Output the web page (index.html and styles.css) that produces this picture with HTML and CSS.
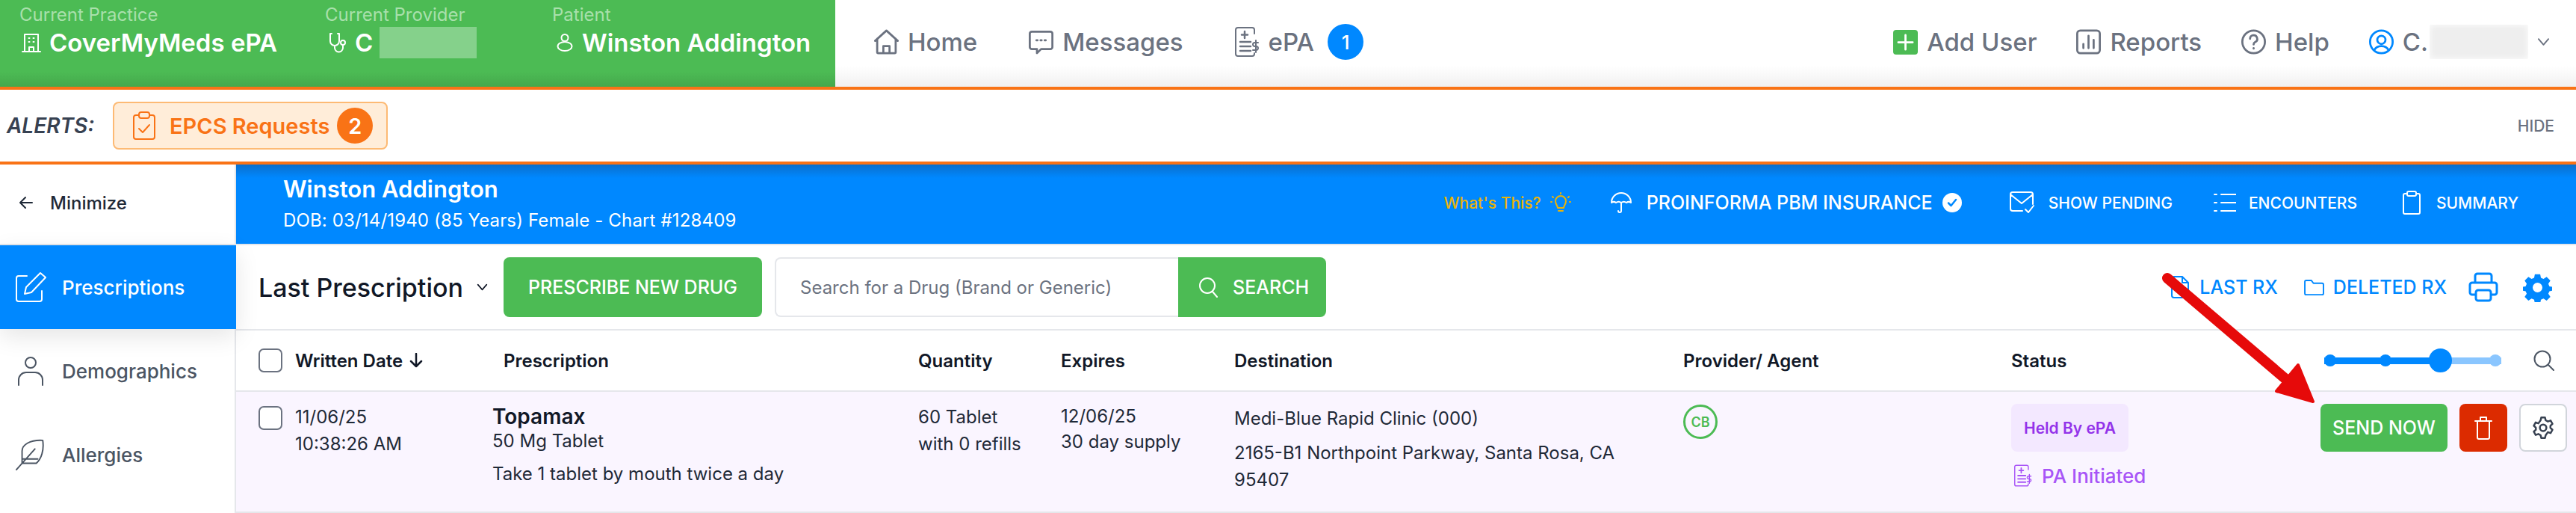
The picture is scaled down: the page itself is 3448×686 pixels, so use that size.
FILE: index.html
```html
<!DOCTYPE html>
<html lang="en">
<head>
    <meta charset="UTF-8">
    <title>Prescriptions - Winston Addington</title>
    <link rel="stylesheet" href="styles.css">
</head>
<body>
    <header class="top-bar">
        <div class="context">
            <div class="context-item practice">
                <span class="context-label">Current Practice</span>
                <span class="context-value">
                    <svg class="icon-building" viewBox="0 0 26 26"><path d="M4 25V2h18v23M1 25h24M10 25v-6h6v6M9.500 7h1M15.500 7h1M9.500 12h1M15.500 12h1"/></svg>
                    CoverMyMeds ePA
                </span>
            </div>
            <div class="context-item provider">
                <span class="context-label">Current Provider</span>
                <span class="context-value">
                    <svg class="icon-scope" viewBox="0 0 27 28"><path d="M5 2H3v10a6 6 0 0 0 12 0V2h-2M9 18v3a5.500 5.500 0 0 0 11 0v-4"/><circle cx="20" cy="14" r="3"/></svg>
                    C<span class="blur-green"></span>
                </span>
            </div>
            <div class="context-item patient">
                <span class="context-label">Patient</span>
                <span class="context-value">
                    <svg class="icon-patient" viewBox="0 0 22 24"><circle cx="11" cy="5.500" r="4.500"/><ellipse cx="11" cy="17" rx="9.500" ry="6"/></svg>
                    Winston Addington
                </span>
            </div>
        </div>
        <nav class="nav-main">
            <a class="nav-link">
                <svg class="icon-nav" viewBox="0 0 24 24"><path d="M1 11 12 1l11 10M3 9v13a1 1 0 0 0 1 1h16a1 1 0 0 0 1-1V9M9 23v-7h6v7"/></svg>
                Home
            </a>
            <a class="nav-link">
                <svg class="icon-nav" viewBox="0 0 24 24"><path d="M3 2h18a2 2 0 0 1 2 2v13a2 2 0 0 1-2 2h-9l-4 4v-4H3a2 2 0 0 1-2-2V4a2 2 0 0 1 2-2z"/><path d="M7.500 10.500h1M11.500 10.500h1M15.500 10.500h1"/></svg>
                Messages
            </a>
            <a class="nav-link">
                <svg class="icon-epa" viewBox="0 0 33 40"><path d="M26 9V4a3 3 0 0 0-3-3H4a3 3 0 0 0-3 3v32a3 3 0 0 0 3 3h19a3 3 0 0 0 3-3v-1"/><path d="M13 6v9M9 10.500h8M7 20h14M7 26h14M7 32h14" stroke-width="2.500"/><path d="M31 21h-4.500a2 2 0 0 0 0 5h2a2 2 0 0 1 0 5H24M28 18v16" stroke-width="2"/></svg>
                ePA
                <span class="count-badge">1</span>
            </a>
        </nav>
        <nav class="nav-side">
            <a class="nav-link">
                <span class="add-box">
                    <svg viewBox="0 0 24 24"><path d="M12 5v14M5 12h14"/></svg>
                </span>
                Add User
            </a>
            <a class="nav-link">
                <svg class="icon-nav" viewBox="0 0 24 24"><rect x="1" y="1" width="22" height="22" rx="3"/><path d="M7 18v-4M12 18V6M17 18V10"/></svg>
                Reports
            </a>
            <a class="nav-link">
                <svg class="icon-nav" viewBox="0 0 24 24"><circle cx="12" cy="12" r="11"/><path d="M8.500 9a3.500 3.500 0 1 1 5 3.200c-1 .5-1.500 1.300-1.500 2.300M12 18v.5"/></svg>
                Help
            </a>
            <a class="nav-link user-link">
                <svg class="icon-nav" viewBox="0 0 24 24"><circle cx="12" cy="12" r="11"/><circle cx="12" cy="10" r="4"/><path d="M5 20c1.500-3 4-4 7-4s5.500 1 7 4"/></svg>
                C.<span class="blur-grey"></span>
                <svg class="chevron" viewBox="0 0 18 12"><path d="m2 2 7 8 7-8"/></svg>
            </a>
        </nav>
    </header>

    <section class="alerts">
        <span class="alerts-label">ALERTS:</span>
        <div class="alert-chip">
            <svg class="icon-clip" viewBox="0 0 32 40"><path d="M9 6H5a3 3 0 0 0-3 3v26a3 3 0 0 0 3 3h22a3 3 0 0 0 3-3V9a3 3 0 0 0-3-3h-4"/><rect x="9" y="2" width="14" height="8" rx="3"/><path d="m9 24 5 5 9-10"/></svg>
            EPCS Requests
            <span class="alert-count">2</span>
        </div>
        <a class="hide-link">HIDE</a>
    </section>

    <div class="workspace">
        <aside class="sidebar">
            <div class="minimize">
                <svg viewBox="0 0 20 20"><path d="M18 10H2M9 3l-7 7 7 7"/></svg>
                Minimize
            </div>
            <div class="side-item active">
                <svg class="icon-side" viewBox="0 0 42 42"><path d="M16 6H5a3 3 0 0 0-3 3v28a3 3 0 0 0 3 3h28a3 3 0 0 0 3-3V26"/><path d="M34 2l7 6-19 20-9 2 2-9z"/></svg>
                Prescriptions
            </div>
            <div class="side-item">
                <svg class="icon-side" viewBox="0 0 42 40"><circle cx="21" cy="9" r="7"/><path d="M5 39v-7a10 10 0 0 1 10-10h12a10 10 0 0 1 10 10v7"/></svg>
                Demographics
            </div>
            <div class="side-item">
                <svg class="icon-side" viewBox="0 0 42 44"><path d="M9 34V17C9 8 20 1 38 2c2 14-2 26-9 32zM1 43 27 14M9 28h22"/></svg>
                Allergies
            </div>
        </aside>

        <main class="content">
            <div class="patient-banner">
                <div class="patient-info">
                    <div class="patient-name">Winston Addington</div>
                    <div class="patient-meta">DOB: 03/14/1940 (85 Years) Female - Chart #128409</div>
                </div>
                <div class="banner-actions">
                    <span class="whats-this">What's This?
                        <svg viewBox="0 0 28 28"><path d="M10 21c0-3-3-5-3-9a7 7 0 0 1 14 0c0 4-3 6-3 9zM11 25h6M14 1v1M3 6l1 1M25 6l-1 1M1 13h1M27 13h-1"/></svg>
                    </span>
                    <span class="insurance">
                        <svg viewBox="0 0 30 30"><path d="M2 15a13 13 0 0 1 26 0c-2-1.500-4-1.500-6 0-2-1.500-5-1.500-7 0-2-1.500-5-1.500-7 0-2-1.500-4-1.500-6 0zM15 15v11a2 2 0 0 1-4 0"/></svg>
                        PROINFORMA PBM INSURANCE
                        <svg class="check-circle" viewBox="0 0 26 26"><circle cx="13" cy="13" r="13"/><path d="m8 13.500 3.500 3.500L18 9"/></svg>
                    </span>
                    <a class="banner-link pending">
                        <svg viewBox="0 0 34 30"><path d="M18 26H5a3 3 0 0 1-3-3V4a3 3 0 0 1 3-3h24a3 3 0 0 1 3 3v13M2 4l15 12L32 4M22 24l4 4 7-9"/></svg>
                        SHOW PENDING
                    </a>
                    <a class="banner-link encounters">
                        <svg viewBox="0 0 30 28"><path d="M10 3h20M10 14h20M10 25h20M1 3h3M1 14h3M1 25h3"/></svg>
                        ENCOUNTERS
                    </a>
                    <a class="banner-link summary">
                        <svg viewBox="0 0 26 32"><path d="M7 4H4a2 2 0 0 0-2 2v23a2 2 0 0 0 2 2h18a2 2 0 0 0 2-2V6a2 2 0 0 0-2-2h-3"/><rect x="7" y="1" width="12" height="6" rx="2"/></svg>
                        SUMMARY
                    </a>
                </div>
            </div>

            <div class="toolbar">
                <div class="rx-select">
                    Last Prescription
                    <svg class="chevron" viewBox="0 0 18 12"><path d="m2 2 7 8 7-8"/></svg>
                </div>
                <button class="btn-green btn-prescribe">PRESCRIBE NEW DRUG</button>
                <div class="drug-search">
                    <input type="text" placeholder="Search for a Drug (Brand or Generic)">
                    <button class="btn-green btn-search">
                        <svg viewBox="0 0 26 28"><circle cx="12" cy="12" r="10"/><path d="m19 20 6 7"/></svg>
                        SEARCH
                    </button>
                </div>
                <div class="toolbar-links">
                    <a class="rx-link last-rx">
                        <svg viewBox="0 0 24 30"><path d="M15 1H4a3 3 0 0 0-3 3v22a3 3 0 0 0 3 3h16a3 3 0 0 0 3-3V9zM15 1v8h8"/></svg>
                        LAST RX
                    </a>
                    <a class="rx-link deleted-rx">
                        <svg viewBox="0 0 28 24"><path d="M1 4a2 2 0 0 1 2-2h7l3 4h12a2 2 0 0 1 2 2v12a2 2 0 0 1-2 2H3a2 2 0 0 1-2-2z"/></svg>
                        DELETED RX
                    </a>
                    <svg class="icon-print" viewBox="0 0 40 40"><path d="M9 14V5a3 3 0 0 1 3-3h16a3 3 0 0 1 3 3v9M9 30H5a3 3 0 0 1-3-3V17a3 3 0 0 1 3-3h30a3 3 0 0 1 3 3v10a3 3 0 0 1-3 3h-4"/><rect x="10" y="24" width="20" height="14" rx="3"/></svg>
                    <svg class="icon-gear" viewBox="0 0 24 24"><path fill-rule="evenodd" d="M14.200 1l.6 3 2.100.9 2.600-1.700 3.100 3.100-1.700 2.600.9 2.100 3 .6v2.800l-3 .6-.9 2.100 1.700 2.600-3.100 3.100-2.600-1.700-2.100.9-.6 3h-4.400l-.6-3-2.100-.9-2.600 1.700-3.100-3.100 1.700-2.600-.9-2.100-3-.6v-2.800l3-.6.9-2.100-1.700-2.600 3.100-3.100 2.600 1.700 2.100-.9.6-3zM12 8a4 4 0 1 0 0 8 4 4 0 0 0 0-8z"/></svg>
                </div>
            </div>

            <div class="rx-table">
                <div class="rx-grid rx-head">
                    <div class="date-cell">
                        <span class="checkbox"></span>
                        Written Date
                        <svg class="sort-arrow" viewBox="0 0 18 20"><path d="M9 1v17M2 11l7 7 7-7"/></svg>
                    </div>
                    <div class="head-prescription">Prescription</div>
                    <div>Quantity</div>
                    <div>Expires</div>
                    <div>Destination</div>
                    <div>Provider/ Agent</div>
                    <div>Status</div>
                    <div class="head-tools">
                        <div class="density-slider">
                            <span class="dot"></span>
                            <span class="dot"></span>
                            <span class="dot dot-big"></span>
                            <span class="dot dot-light"></span>
                        </div>
                        <svg class="icon-find" viewBox="0 0 28 28"><circle cx="12" cy="12" r="10.500"/><path d="m20 20 7 7"/></svg>
                    </div>
                </div>
                <div class="rx-grid rx-row">
                    <div class="date-cell row-date">
                        <span class="checkbox"></span>
                        <div class="two-lines">
                            <div>11/06/25</div>
                            <div>10:38:26 AM</div>
                        </div>
                    </div>
                    <div class="drug">
                        <div class="drug-name">Topamax</div>
                        <div class="drug-strength">50 Mg Tablet</div>
                        <div class="drug-sig">Take 1 tablet by mouth twice a day</div>
                    </div>
                    <div class="two-lines">
                        <div>60 Tablet</div>
                        <div>with 0 refills</div>
                    </div>
                    <div class="expires">
                        <div>12/06/25</div>
                        <div>30 day supply</div>
                    </div>
                    <div class="destination">
                        <div class="dest-name">Medi-Blue Rapid Clinic (000)</div>
                        <div>2165-B1 Northpoint Parkway, Santa Rosa, CA 95407</div>
                    </div>
                    <div><span class="agent-badge">CB</span></div>
                    <div class="status">
                        <span class="held-badge">Held By ePA</span>
                        <span class="pa-status">
                            <svg viewBox="0 0 33 40"><path d="M26 9V4a3 3 0 0 0-3-3H4a3 3 0 0 0-3 3v32a3 3 0 0 0 3 3h19a3 3 0 0 0 3-3v-1"/><path d="M13 6v9M9 10.500h8M7 20h14M7 26h14M7 32h14" stroke-width="2.500"/><path d="M31 21h-4.500a2 2 0 0 0 0 5h2a2 2 0 0 1 0 5H24M28 18v16" stroke-width="2"/></svg>
                            PA Initiated
                        </span>
                    </div>
                    <div class="row-actions">
                        <button class="btn-green btn-send">SEND NOW</button>
                        <button class="btn-delete">
                            <svg viewBox="0 0 24 32"><path d="M1 7h22M8 7V2h8v5M4 7v22a2 2 0 0 0 2 2h12a2 2 0 0 0 2-2V7"/></svg>
                        </button>
                        <button class="btn-settings">
                            <svg viewBox="0 0 24 24"><path d="M10 1h4l.7 3 2.400 1.300 2.900-1 2 3.500-2.200 2.100v2.200l2.200 2.100-2 3.500-2.900-1L14.700 20l-.7 3h-4l-.7-3-2.400-1.300-2.900 1-2-3.500 2.200-2.100v-2.200L2 9.800l2-3.500 2.900 1L9.300 4z"/><circle cx="12" cy="12" r="3.500"/></svg>
                        </button>
                    </div>
                </div>
            </div>
        </main>
    </div>

    <svg class="red-arrow" viewBox="0 0 220 190"><path class="arrow-shaft" d="M11 12 172 149"/><path class="arrow-head" d="M206 177 157 163 186 128z"/></svg>
</body>
</html>
```

FILE: styles.css
```css
* {
    box-sizing: border-box;
}

body {
    margin: 0;
    width: 3448px;
    height: 686px;
    overflow: hidden;
    position: relative;
    font-family: Inter, "Liberation Sans", sans-serif;
    background-color: #fff;
    color: #111827;
}

svg {
    fill: none;
    stroke: currentColor;
    stroke-width: 2;
    stroke-linecap: round;
    stroke-linejoin: round;
    flex-shrink: 0;
}

button {
    font-family: inherit;
    border: none;
}

/* top bar */
.top-bar {
    height: 116px;
    display: flex;
    background: linear-gradient(to bottom, #fff 88px, #f1f0f0 116px);
}

.context {
    width: 1118px;
    display: flex;
    padding: 8px 0 0 26px;
    color: #fff;
    background: linear-gradient(to bottom, #4cbb54 96px, #45a84c 116px);
}

.context-item {
    display: flex;
    flex-direction: column;
}

.practice {
    width: 409px;
}

.provider {
    width: 304px;
}

.context-label {
    font-size: 24px;
    line-height: 24px;
    color: #a9e0ac;
}

.context-value {
    display: flex;
    align-items: center;
    height: 50px;
    font-size: 33px;
    font-weight: 600;
}

.icon-building {
    width: 26px;
    height: 26px;
    margin: 0 11px 0 3px;
}

.icon-scope {
    width: 27px;
    height: 28px;
    margin: 0 9px 0 4px;
}

.icon-patient {
    width: 22px;
    height: 24px;
    margin: 0 12px 0 6px;
}

.blur-green {
    width: 130px;
    height: 42px;
    margin-left: 9px;
    background-color: rgba(255, 255, 255, 0.32);
}

.nav-main {
    display: flex;
    align-items: center;
    padding: 0 0 0 52px;
    gap: 69px;
    height: 112px;
}

.nav-side {
    display: flex;
    align-items: center;
    margin-left: auto;
    padding-right: 35px;
    gap: 53px;
    height: 112px;
}

.nav-link {
    display: flex;
    align-items: center;
    gap: 12px;
    font-size: 33px;
    font-weight: 500;
    color: #6b7280;
}

.icon-nav {
    width: 33px;
    height: 34px;
}

.icon-epa {
    width: 33px;
    height: 40px;
}

.count-badge {
    width: 48px;
    height: 48px;
    margin-left: 6px;
    border-radius: 50%;
    background-color: #0088ff;
    color: #fff;
    font-size: 26px;
    display: flex;
    align-items: center;
    justify-content: center;
}

.add-box {
    width: 33px;
    height: 33px;
    border-radius: 4px;
    background-color: #4cbb54;
    color: #fff;
    display: flex;
}

.add-box svg {
    width: 33px;
    height: 33px;
}

.user-link .icon-nav {
    color: #0088ff;
}

.blur-grey {
    width: 132px;
    height: 46px;
    background-color: #eee;
    box-shadow: inset 0 0 8px #fff;
    margin-left: -10px;
}

.chevron {
    width: 17px;
    height: 12px;
}

/* alerts */
.alerts {
    height: 104px;
    display: flex;
    align-items: center;
    border-top: 4px solid #f97316;
    border-bottom: 4px solid #f97316;
    padding: 0 29px 0 9px;
    background-color: #fff;
}

.alerts-label {
    width: 117px;
    font-size: 28px;
    font-weight: 600;
    font-style: italic;
    color: #374151;
    margin-right: 25px;
}

.alert-chip {
    width: 368px;
    height: 64px;
    display: flex;
    align-items: center;
    padding-left: 24px;
    border: 2px solid #fdba74;
    border-radius: 8px;
    background-color: #ffedd9;
    color: #f97316;
    font-size: 29px;
    font-weight: 600;
}

.icon-clip {
    width: 32px;
    height: 40px;
    margin-right: 18px;
}

.alert-count {
    width: 48px;
    height: 48px;
    margin-left: 10px;
    border-radius: 50%;
    background-color: #f97316;
    color: #fff;
    display: flex;
    align-items: center;
    justify-content: center;
}

.hide-link {
    margin-left: auto;
    font-size: 21px;
    font-weight: 500;
    color: #6b7280;
}

/* sidebar */
.workspace {
    display: flex;
    height: 466px;
}

.sidebar {
    width: 316px;
    flex-shrink: 0;
    border-right: 2px solid #e5e7eb;
    background-color: #fff;
}

.minimize {
    height: 108px;
    display: flex;
    align-items: center;
    padding: 0 0 4px 25px;
    gap: 22px;
    font-size: 24px;
    font-weight: 500;
    color: #1f2937;
    border-bottom: 2px solid #e5e7eb;
}

.minimize svg {
    width: 20px;
    height: 20px;
}

.side-item {
    height: 112px;
    display: flex;
    align-items: center;
    padding-left: 20px;
    gap: 21px;
    font-size: 26px;
    font-weight: 500;
    color: #4b5563;
}

.side-item.active {
    position: relative;
    width: 316px;
    background-color: #0088ff;
    color: #fff;
    box-shadow: 0 10px 30px rgba(0, 0, 0, 0.1);
}

.icon-side {
    width: 42px;
    height: 42px;
}

/* blue banner */
.content {
    flex: 1;
    min-width: 0;
}

.patient-banner {
    height: 106px;
    display: flex;
    align-items: center;
    padding: 0 77px 4px 63px;
    color: #fff;
    background: linear-gradient(to bottom, #0a6fcc 0, #0088ff 18px);
}

.patient-name {
    font-size: 31px;
    font-weight: 600;
    line-height: 42px;
}

.patient-meta {
    font-size: 24px;
    letter-spacing: 0.15px;
    line-height: 30px;
    margin-top: 6px;
}

.banner-actions {
    margin-left: auto;
    display: flex;
    align-items: center;
    font-weight: 500;
}

.whats-this {
    display: flex;
    align-items: center;
    gap: 12px;
    font-size: 21px;
    color: #eab308;
    margin-right: 52px;
}

.whats-this svg {
    width: 28px;
    height: 28px;
}

.insurance {
    display: flex;
    align-items: center;
    gap: 13px;
    font-size: 25px;
    margin-right: 63px;
}

.insurance svg {
    width: 30px;
    height: 30px;
    margin-right: 6px;
}

.insurance .check-circle {
    width: 26px;
    height: 26px;
    margin: 0;
    fill: #fff;
    stroke: none;
}

.check-circle path {
    fill: none;
    stroke: #0088ff;
    stroke-width: 2.500;
}

.banner-link {
    display: flex;
    align-items: center;
    font-size: 21px;
}

.pending svg {
    width: 34px;
    height: 30px;
    margin-right: 19px;
}

.encounters {
    margin-left: 55px;
}

.encounters svg {
    width: 30px;
    height: 28px;
    margin-right: 17px;
}

.summary {
    margin-left: 60px;
}

.summary svg {
    width: 26px;
    height: 32px;
    margin-right: 20px;
}

/* toolbar */
.toolbar {
    height: 116px;
    display: flex;
    align-items: center;
    padding: 0 32px 0 30px;
    border-top: 2px solid #e5e7eb;
    border-bottom: 2px solid #e5e7eb;
}

.rx-select {
    width: 328px;
    display: flex;
    align-items: center;
    gap: 18px;
    font-size: 34px;
    font-weight: 500;
}

.rx-select .chevron {
    width: 15px;
    height: 10px;
}

.btn-green {
    background-color: #4cbb54;
    color: #fff;
    font-weight: 500;
}

.btn-prescribe {
    width: 346px;
    height: 80px;
    border-radius: 8px;
    font-size: 25px;
}

.drug-search {
    display: flex;
    margin-left: 17px;
    height: 80px;
}

.drug-search input {
    width: 540px;
    padding: 0 32px;
    border: 2px solid #e5e7eb;
    border-right: none;
    border-radius: 8px 0 0 8px;
    font-family: inherit;
    font-size: 24px;
    outline: none;
}

.drug-search input::placeholder {
    color: #6b7280;
}

.btn-search {
    width: 198px;
    border-radius: 0 8px 8px 0;
    font-size: 25px;
    display: flex;
    align-items: center;
    gap: 20px;
    padding-left: 27px;
}

.btn-search svg {
    width: 26px;
    height: 28px;
}

.toolbar-links {
    margin-left: auto;
    display: flex;
    align-items: center;
    color: #0088ff;
}

.rx-link {
    display: flex;
    align-items: center;
    font-size: 25px;
    font-weight: 500;
}

.last-rx svg {
    width: 24px;
    height: 30px;
    margin-right: 14px;
}

.deleted-rx {
    margin-left: 35px;
}

.deleted-rx svg {
    width: 27px;
    height: 23px;
    margin-right: 12px;
}

.icon-print {
    width: 40px;
    height: 40px;
    margin-left: 29px;
    stroke-width: 3;
}

.icon-gear {
    width: 39px;
    height: 39px;
    margin-left: 33px;
    fill: currentColor;
    stroke: none;
}

/* table */
.rx-grid {
    display: grid;
    grid-template-columns: 313px 570px 191px 232px 601px 439px 414px 1fr;
    padding-left: 30px;
}

.rx-head {
    height: 82px;
    align-items: center;
    border-bottom: 2px solid #e5e7eb;
    font-size: 24px;
    font-weight: 600;
}

.date-cell {
    display: flex;
    align-items: center;
    gap: 17px;
}

.checkbox {
    width: 32px;
    height: 32px;
    flex-shrink: 0;
    background-color: #fff;
    border: 2px solid #6b7280;
    border-radius: 7px;
}

.sort-arrow {
    width: 18px;
    height: 20px;
    margin-left: -8px;
    stroke-width: 2.500;
}

.head-prescription {
    padding-left: 15px;
}

.head-tools {
    display: flex;
    align-items: center;
    padding-left: 5px;
}

.density-slider {
    width: 237px;
    display: flex;
    align-items: center;
    gap: 58px;
    background: linear-gradient(to right, #0088ff 66%, #8ac6ff 66%) center / 100% 9px no-repeat;
}

.dot {
    width: 16px;
    height: 16px;
    border-radius: 50%;
    background-color: #0088ff;
}

.dot-big {
    width: 32px;
    height: 32px;
    margin: 0 -8px;
}

.dot-light {
    background-color: #8ac6ff;
}

.icon-find {
    width: 28px;
    height: 28px;
    margin-left: 43px;
    color: #4b5563;
}

.rx-row {
    height: 162px;
    padding-top: 16px;
    border-bottom: 2px solid #e5e7eb;
    background-color: #faf5ff;
    font-size: 24px;
    color: #1f2937;
}

.row-date {
    align-items: flex-start;
    padding-top: 3px;
}

.row-date .two-lines {
    margin-top: -3px;
}

.two-lines {
    line-height: 36px;
}

.drug-name {
    font-size: 28px;
    font-weight: 600;
    line-height: 34px;
    color: #111827;
}

.drug-strength {
    line-height: 32px;
}

.drug-sig {
    margin-top: 12px;
    line-height: 32px;
}

.expires {
    line-height: 34px;
}

.destination {
    line-height: 36px;
    padding: 2px 40px 0 0;
}

.dest-name {
    margin-bottom: 10px;
}

.agent-badge {
    width: 46px;
    height: 46px;
    margin-top: 1px;
    border: 3px solid #4cbb54;
    border-radius: 50%;
    color: #4cbb54;
    font-size: 18px;
    font-weight: 600;
    display: flex;
    align-items: center;
    justify-content: center;
}

.status {
    display: flex;
    flex-direction: column;
    align-items: flex-start;
}

.held-badge {
    width: 157px;
    height: 64px;
    border-radius: 8px;
    background-color: #f3e8ff;
    color: #9333ea;
    font-size: 21px;
    font-weight: 600;
    display: flex;
    align-items: center;
    justify-content: center;
}

.pa-status {
    margin-top: 16px;
    display: flex;
    align-items: center;
    gap: 13px;
    padding-left: 4px;
    color: #a855f7;
    font-size: 26px;
    font-weight: 500;
}

.pa-status svg {
    width: 24px;
    height: 32px;
}

.row-actions {
    display: flex;
    gap: 16px;
    height: 64px;
}

.btn-send {
    width: 170px;
    border-radius: 8px;
    font-size: 25px;
}

.btn-delete {
    width: 64px;
    border-radius: 8px;
    background-color: #dc2b00;
    color: #fff;
    display: flex;
    align-items: center;
    justify-content: center;
}

.btn-delete svg {
    width: 24px;
    height: 32px;
}

.btn-settings {
    width: 64px;
    border: 2px solid #d1d5db;
    border-radius: 8px;
    background-color: #fff;
    color: #374151;
    display: flex;
    align-items: center;
    justify-content: center;
}

.btn-settings svg {
    width: 30px;
    height: 30px;
}

/* annotation drawn over the screenshot */
.red-arrow {
    position: absolute;
    left: 2890px;
    top: 360px;
    width: 220px;
    height: 190px;
}

.arrow-shaft {
    stroke: #e60a0a;
    stroke-width: 14;
}

.arrow-head {
    fill: #e60a0a;
    stroke: #e60a0a;
    stroke-width: 4;
}
```
